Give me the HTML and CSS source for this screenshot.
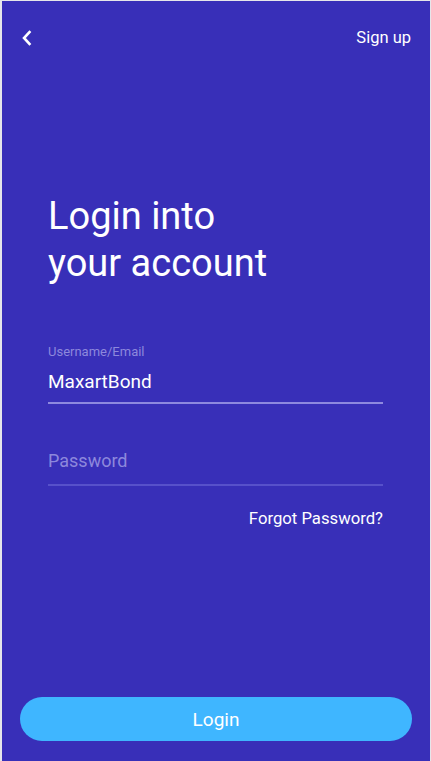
FILE: index.html
```html
<!DOCTYPE html>
<html lang="en">
<head>
<meta charset="utf-8">
<title>Login</title>
<link rel="stylesheet" href="styles.css">
</head>
<body>
<div class="page">
  <header class="topbar">
    <button class="back" aria-label="Back">
      <svg width="12" height="16" viewBox="0 0 12 16"><path d="M8.5 2 L3 8 L8.5 14" fill="none" stroke="#fff" stroke-width="2.6" stroke-linecap="square" stroke-linejoin="miter"/></svg>
    </button>
    <a class="signup" href="#">Sign up</a>
  </header>
  <main class="content">
    <h1 class="title">Login into<br>your account</h1>
    <div class="field field-filled">
      <div class="label">Username/Email</div>
      <div class="value">MaxartBond</div>
    </div>
    <div class="field field-empty">
      <div class="placeholder">Password</div>
    </div>
    <div class="forgot-row"><a class="forgot" href="#">Forgot Password?</a></div>
  </main>
  <button class="login">Login</button>
</div>
</body>
</html>
```

FILE: styles.css
```css
* { box-sizing: border-box; }
html, body { margin: 0; padding: 0; }
body {
  background: #e6e6ea;
  font-family: Roboto, "Liberation Sans", sans-serif;
  height: 761px;
  overflow: hidden;
}
.page {
  margin: 1px 1px 0 2px;
  height: 760px;
  background: #382fb8;
  display: flex;
  flex-direction: column;
  color: #fff;
}
.topbar {
  height: 74px;
  display: flex;
  align-items: center;
  justify-content: space-between;
  padding: 0 19px 0 19px;
}
.back {
  background: none;
  border: 0;
  padding: 0;
  width: 12px;
  height: 16px;
  display: flex;
}
.signup {
  color: #fff;
  text-decoration: none;
  font-size: 16.5px;
  line-height: 20px;
}
.content {
  padding: 0 47px 0 46px;
  flex: 1;
}
.title {
  margin: 118px 0 0 0;
  font-weight: 400;
  font-size: 38px;
  line-height: 47px;
}
.field {
  border-bottom: 2px solid #8e89df;
}
.field-filled {
  margin-top: 57px;
  padding-bottom: 9px;
}
.label {
  font-size: 13px;
  line-height: 15px;
  color: #8d88dc;
}
.value {
  margin-top: 12px;
  font-size: 19px;
  line-height: 22px;
}
.field-empty {
  margin-top: 46px;
  padding-bottom: 13px;
  border-bottom-color: #5751ca;
}
.placeholder {
  font-size: 18px;
  line-height: 21px;
  color: #8d88dc;
}
.forgot-row {
  margin-top: 23px;
  display: flex;
  justify-content: flex-end;
}
.forgot {
  color: #fff;
  text-decoration: none;
  font-size: 16.7px;
  line-height: 19px;
}
.login {
  margin: 0 18px 20px 18px;
  height: 44px;
  border: 0;
  border-radius: 22px;
  background: #3fb6ff;
  color: #fff;
  font-family: Roboto, "Liberation Sans", sans-serif;
  font-size: 19px;
  padding: 0;
}
```
